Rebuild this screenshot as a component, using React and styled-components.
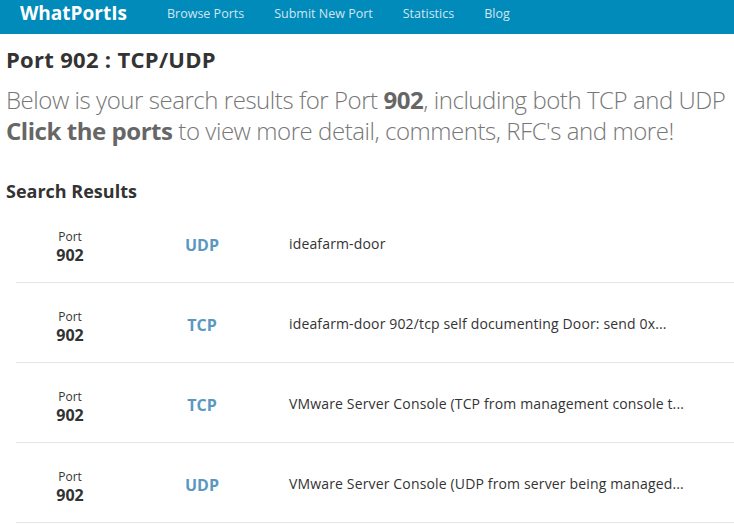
import React from "react";
import styled, { createGlobalStyle } from "styled-components";

const Global = createGlobalStyle`
  html, body { margin: 0; padding: 0; background: #fff; }
  body { font-family: "Open Sans", "Liberation Sans", sans-serif; color: #333; }
`;

const Navbar = styled.nav`
  box-sizing: border-box;
  height: 34px;
  padding-bottom: 8px;
  background: #008bbb;
  display: flex;
  align-items: center;
`;

const Brand = styled.a`
  color: #fff;
  font-weight: 700;
  font-size: 19px;
  margin-left: 20px;
  width: 147px;
`;

const NavLink = styled.a`
  color: #d3e5ee;
  font-size: 12.5px;
  margin-right: 30px;
`;

const Main = styled.main`
  padding: 0 0 0 6px;
`;

const Title = styled.h1`
  margin: 10px 0 0;
  font-size: 22px;
  font-weight: 700;
  line-height: 30px;
  letter-spacing: 0.3px;
  color: #333;
`;

const Lead = styled.p`
  margin: 10px 0 0;
  font-size: 24px;
  font-weight: 300;
  line-height: 31px;
  letter-spacing: -0.45px;
  color: #777;
  white-space: nowrap;
  b { font-weight: 700; color: #666; }
`;

const SectionTitle = styled.h2`
  margin: 34px 0 0;
  font-size: 18px;
  font-weight: 700;
  line-height: 23px;
  color: #333;
`;

const Results = styled.div`
  margin: 0 0 0 10px;
`;

const Row = styled.div`
  display: grid;
  grid-template-columns: 108px 156px 1fr;
  align-items: center;
  height: 79px;
  border-bottom: 1px solid #e6e6e6;
`;

const PortCell = styled.div`
  display: flex;
  flex-direction: column;
  align-items: center;
  padding-top: 8px;
`;

const PortLabel = styled.span`
  font-size: 12px;
  line-height: 16px;
  color: #333;
`;

const PortNum = styled.span`
  font-size: 16px;
  font-weight: 700;
  line-height: 20px;
  color: #333;
`;

const Proto = styled.div`
  text-align: center;
  font-size: 16px;
  font-weight: 700;
  color: #5a98bf;
  padding-top: 5px;
`;

const Desc = styled.div`
  font-size: 14px;
  letter-spacing: 0.15px;
  color: #333;
  padding-left: 9px;
  padding-top: 1px;
`;

const rows = [
  { proto: "UDP", desc: "ideafarm-door" },
  { proto: "TCP", desc: "ideafarm-door 902/tcp self documenting Door: send 0x..." },
  { proto: "TCP", desc: "VMware Server Console (TCP from management console t..." },
  { proto: "UDP", desc: "VMware Server Console (UDP from server being managed..." },
];

export default function App() {
  return (
    <>
      <Global />
      <Navbar>
        <Brand>WhatPortIs</Brand>
        <NavLink>Browse Ports</NavLink>
        <NavLink>Submit New Port</NavLink>
        <NavLink>Statistics</NavLink>
        <NavLink>Blog</NavLink>
      </Navbar>
      <Main>
        <Title>Port 902 : TCP/UDP</Title>
        <Lead>
          Below is your search results for Port <b>902</b>, including both TCP and UDP
          <br />
          <b>Click the ports</b> to view more detail, comments, RFC's and more!
        </Lead>
        <SectionTitle>Search Results</SectionTitle>
        <Results>
          {rows.map((r, i) => (
            <Row key={i}>
              <PortCell>
                <PortLabel>Port</PortLabel>
                <PortNum>902</PortNum>
              </PortCell>
              <Proto>{r.proto}</Proto>
              <Desc>{r.desc}</Desc>
            </Row>
          ))}
        </Results>
      </Main>
    </>
  );
}
